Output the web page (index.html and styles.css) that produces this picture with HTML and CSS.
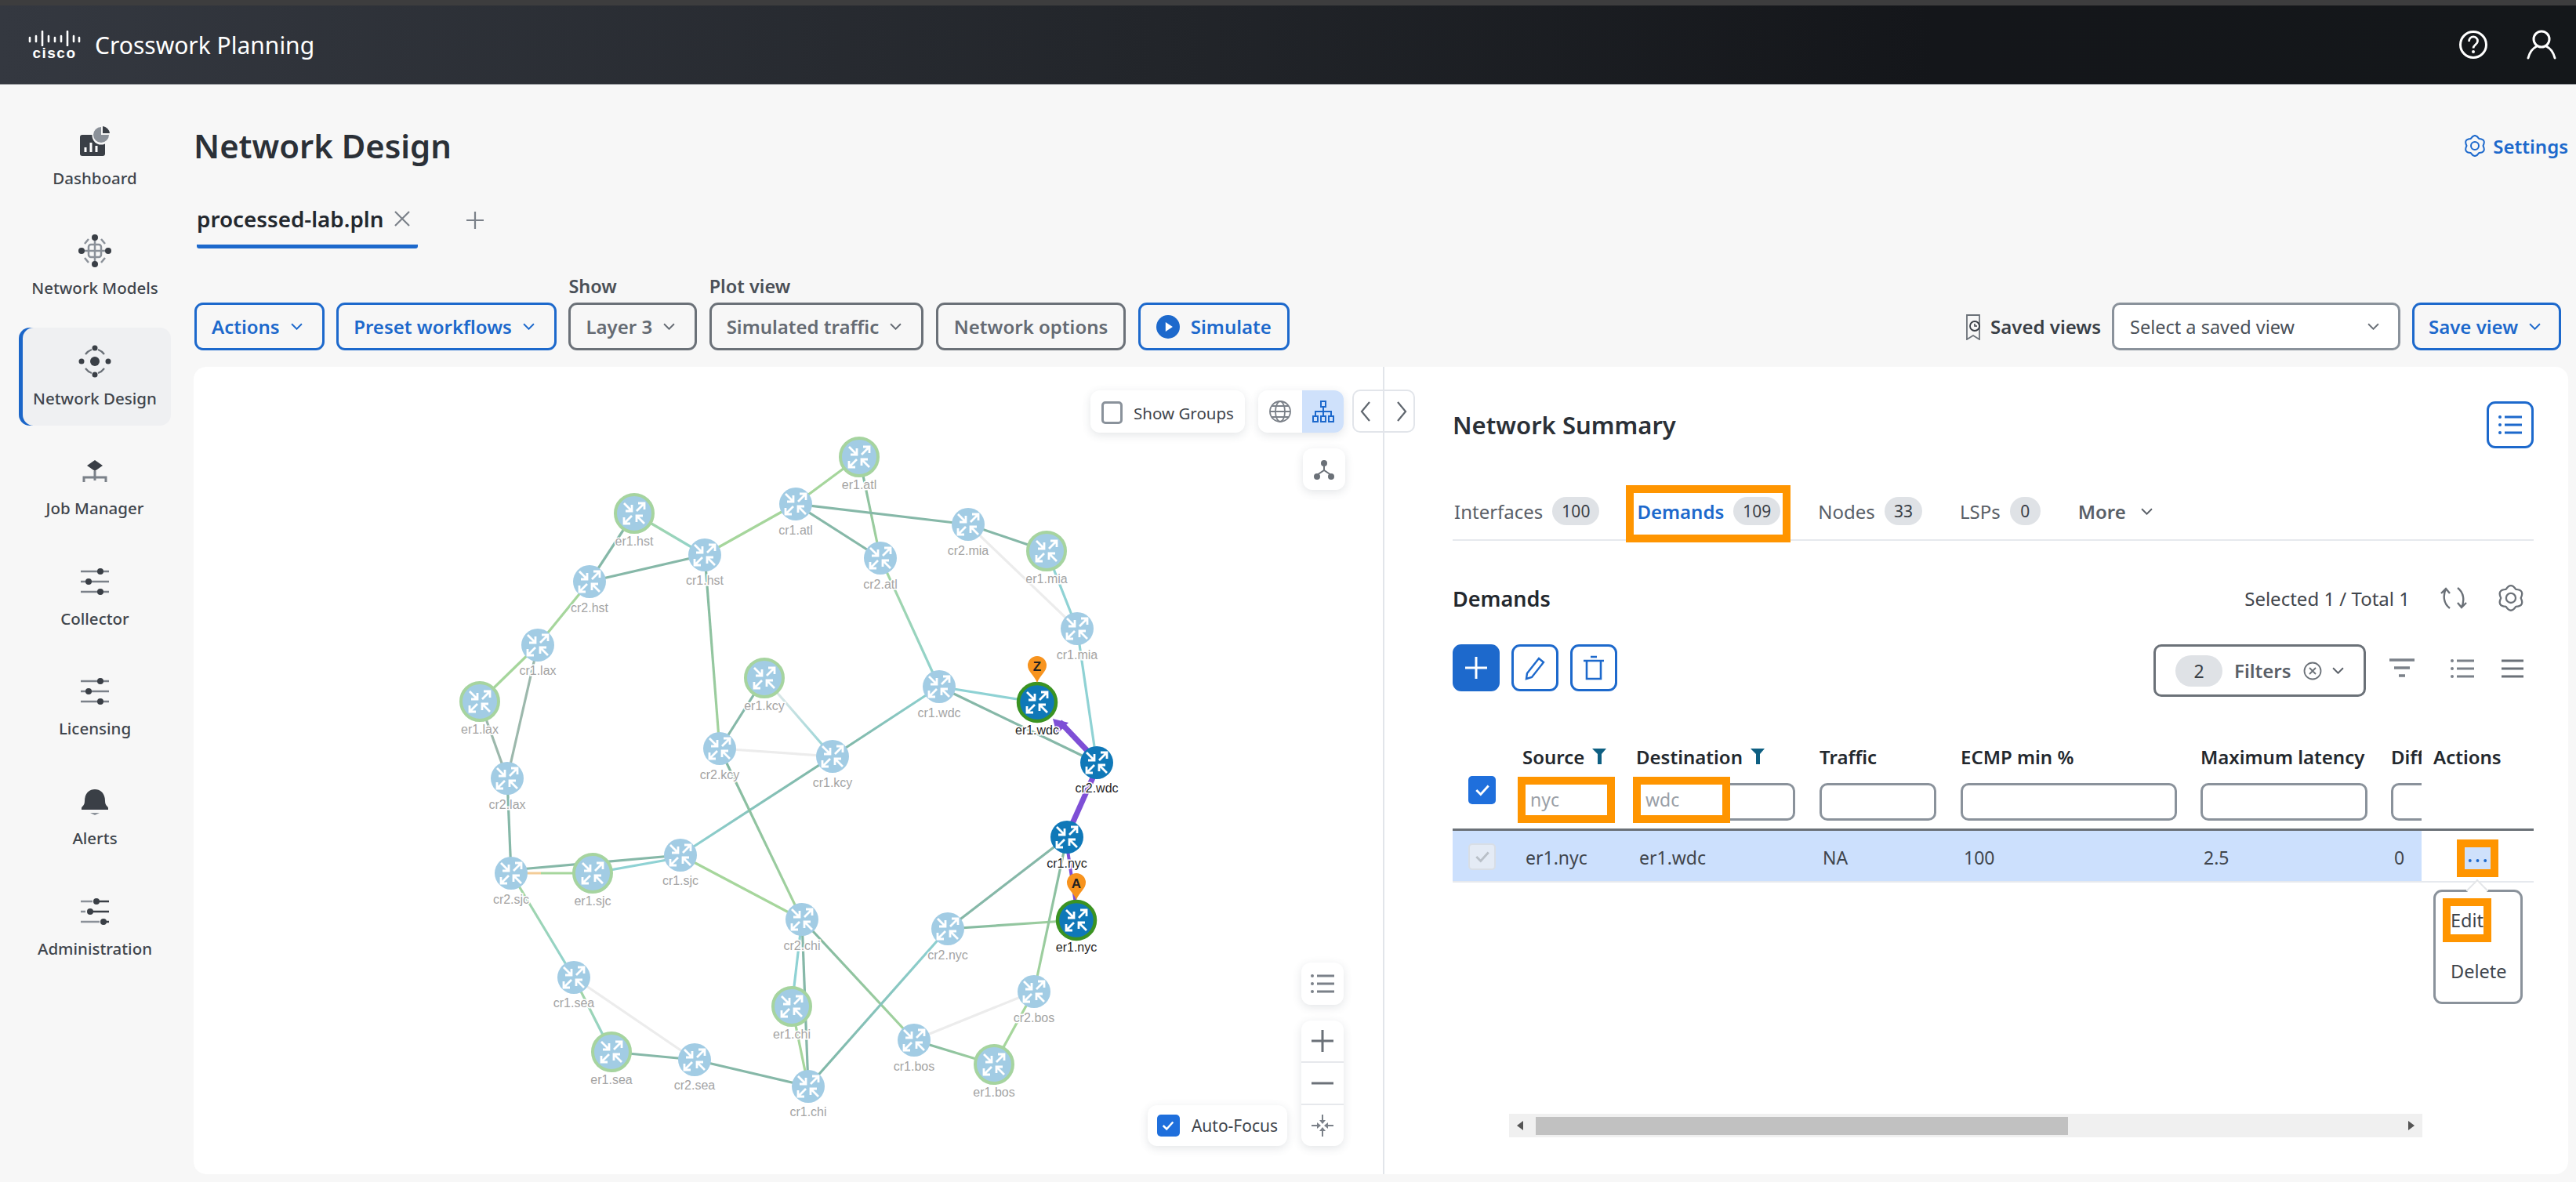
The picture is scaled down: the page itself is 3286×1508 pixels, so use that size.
FILE: index.html
```html
<!DOCTYPE html>
<html lang="en">
<head>
<meta charset="utf-8">
<title>Crosswork Planning</title>
<link rel="stylesheet" href="styles.css">
</head>
<body>
<div class="strip"></div>
<header class="topbar">
  <div class="brand">
    <div class="logo">
      <svg class="logo-bars" viewBox="0 0 67 20" width="67" height="20"><g fill="none" stroke="#fff" stroke-width="2.6" stroke-linecap="round"><path d="M2 9v5M10 7v7M18 1v18M26 7v7M34 9v5M42 7v7M50 1v18M58 7v7M65 9v5"/></g></svg>
      <span class="logo-word">cisco</span>
    </div>
    <span class="product">Crosswork Planning</span>
  </div>
  <div class="top-icons">
    <svg viewBox="0 0 38 38" width="38" height="38"><circle cx="19" cy="19" r="16.5" fill="none" stroke="#fff" stroke-width="3"/><path d="M13.5 15c0-8 11-8 11-.5 0 4.500-5.500 4.500-5.500 9" fill="none" stroke="#fff" stroke-width="2.800"/><circle cx="19" cy="28" r="2" fill="#fff"/></svg>
    <svg viewBox="0 0 38 38" width="38" height="38"><circle cx="19" cy="12" r="10" fill="none" stroke="#fff" stroke-width="3"/><path d="M2 36c2-8 7-13 11-15M36 36c-2-8-7-13-11-15" fill="none" stroke="#fff" stroke-width="3" stroke-linecap="round"/></svg>
  </div>
</header>
<div class="shell">
  <nav class="sidebar">
    <a class="nav-item">
      <svg class="nav-icon" viewBox="0 0 44 44"><rect x="3" y="14" width="32" height="27" rx="3" fill="#3a3f46"/><circle cx="30" cy="15" r="11.500" fill="#f7f7f7"/><path d="M30 4a10 10 0 1 0 10 10H30z" fill="#8b9199"/><path d="M32 3a10 10 0 0 1 9 9h-9z" fill="#3a3f46"/><path d="M10 36v-6M17 36V24M24 36v-8" stroke="#fff" stroke-width="3"/></svg>
      <span>Dashboard</span>
    </a>
    <a class="nav-item">
      <svg class="nav-icon" viewBox="0 0 44 44"><g fill="none" stroke="#8b9199" stroke-width="2.500"><rect x="14" y="14" width="16" height="16" rx="3"/><path d="M22 5v34M5 22h34M9 13l5-6M35 13l-5-6M9 31l5 6M35 31l-5 6"/></g><g fill="#3a3f46"><circle cx="22" cy="5" r="4"/><circle cx="22" cy="39" r="4"/><circle cx="5" cy="22" r="4"/><circle cx="39" cy="22" r="4"/></g></svg>
      <span>Network Models</span>
    </a>
    <a class="nav-item active">
      <svg class="nav-icon" viewBox="0 0 44 44"><g fill="none" stroke="#6b7178" stroke-width="2.200"><path d="M10 13a17 17 0 0 1 8-6M34 13a17 17 0 0 0-8-6M10 31a17 17 0 0 0 8 6M34 31a17 17 0 0 1-8 6"/></g><g fill="#3a3f46"><circle cx="22" cy="22" r="6"/><circle cx="22" cy="5" r="3.500"/><circle cx="22" cy="39" r="3.500"/><circle cx="5" cy="22" r="3.500"/><circle cx="39" cy="22" r="3.500"/></g></svg>
      <span>Network Design</span>
    </a>
    <a class="nav-item">
      <svg class="nav-icon" viewBox="0 0 44 44"><path d="M22 8l10 7-10 7-10-7z" fill="#3a3f46"/><path d="M22 22v8M8 36v-6h28v6M22 30v4" fill="none" stroke="#7b8189" stroke-width="3"/></svg>
      <span>Job Manager</span>
    </a>
    <a class="nav-item">
      <svg class="nav-icon" viewBox="0 0 44 44"><use href="#sliders"/></svg>
      <span>Collector</span>
    </a>
    <a class="nav-item">
      <svg class="nav-icon" viewBox="0 0 44 44"><use href="#sliders"/></svg>
      <span>Licensing</span>
    </a>
    <a class="nav-item">
      <svg class="nav-icon" viewBox="0 0 44 44"><path d="M5 31c0-2 4-3 4-9 0-9 5-15 13-15s13 6 13 15c0 6 4 7 4 9v2H5z" fill="#3a3f46"/><path d="M16 37h12l-6 3z" fill="#8b9199"/></svg>
      <span>Alerts</span>
    </a>
    <a class="nav-item">
      <svg class="nav-icon" viewBox="0 0 44 44"><g stroke-width="2.500" fill="none"><path d="M4 9h15M4 22h6M4 35h24" stroke="#8b9199"/><path d="M24 9h16M16 22h24M34 35h6" stroke="#3a3f46"/></g><g fill="#3a3f46"><circle cx="24" cy="9" r="4"/><circle cx="16" cy="22" r="4"/><circle cx="33" cy="35" r="4"/></g></svg>
      <span>Administration</span>
    </a>
  </nav>

  <main class="content">
    <div class="title-row">
      <h1 class="page-title">Network Design</h1>
      <a class="settings-link">
        <svg viewBox="0 0 28 28" width="28" height="28"><use href="#gear"/></svg>
        <span>Settings</span>
      </a>
    </div>
    <div class="file-tabs">
      <div class="file-tab">
        <span class="file-name">processed-lab.pln</span>
        <svg viewBox="0 0 20 20" width="20" height="20"><path d="M1 1l18 18M19 1L1 19" stroke="#7b8189" stroke-width="2.200"/></svg>
      </div>
      <svg class="file-add" viewBox="0 0 22 22" width="22" height="22"><path d="M11 0v22M0 11h22" stroke="#7b8189" stroke-width="2.200"/></svg>
    </div>

    <div class="toolbar">
      <button class="btn btn-blue">Actions <svg class="chev" viewBox="0 0 14 8"><path d="M1 1l6 6 6-6"/></svg></button>
      <button class="btn btn-blue">Preset workflows <svg class="chev" viewBox="0 0 14 8"><path d="M1 1l6 6 6-6"/></svg></button>
      <div class="labelled">
        <label class="field-label">Show</label>
        <button class="btn btn-grey">Layer 3 <svg class="chev" viewBox="0 0 14 8"><path d="M1 1l6 6 6-6"/></svg></button>
      </div>
      <div class="labelled">
        <label class="field-label">Plot view</label>
        <button class="btn btn-grey">Simulated traffic <svg class="chev" viewBox="0 0 14 8"><path d="M1 1l6 6 6-6"/></svg></button>
      </div>
      <button class="btn btn-grey btn-plain">Network options</button>
      <button class="btn btn-blue btn-plain btn-sim">
        <svg viewBox="0 0 28 28" width="30" height="30"><circle cx="14" cy="14" r="14" fill="#1d69cc"/><path d="M11 8.500l8.500 5.500-8.500 5.500z" fill="#fff"/></svg>
        Simulate
      </button>
      <div class="toolbar-right">
        <span class="saved-label">
          <svg viewBox="0 0 22 34" width="22" height="34"><path d="M3 25V2h16v23M3 25v8l8-5 8 5v-8" fill="none" stroke="#6b7178" stroke-width="1.800"/><circle cx="13" cy="16" r="6" fill="none" stroke="#3a3f46" stroke-width="1.800"/><path d="M13 13v3h3" fill="none" stroke="#3a3f46" stroke-width="1.500"/></svg>
          Saved views
        </span>
        <div class="select">
          <span>Select a saved view</span>
          <svg class="chev" viewBox="0 0 14 8"><path d="M1 1l6 6 6-6"/></svg>
        </div>
        <button class="btn btn-blue btn-save">Save view <svg class="chev" viewBox="0 0 14 8"><path d="M1 1l6 6 6-6"/></svg></button>
      </div>
    </div>

    <section class="panel">
      <div class="graph-pane">
        <svg class="graph" viewBox="247 468 1518 1030" width="1518" height="1030">
          <defs>
            <linearGradient id="v-dg" x1="0" y1="0" x2="0" y2="1"><stop offset="0" stop-color="#7fb5a3"/><stop offset="1" stop-color="#a6d69c"/></linearGradient>
            <linearGradient id="v-dt" x1="0" y1="0" x2="0" y2="1"><stop offset="0" stop-color="#7fb5a3"/><stop offset="1" stop-color="#8fd2d4"/></linearGradient>
            <linearGradient id="v-td" x1="0" y1="0" x2="0" y2="1"><stop offset="0" stop-color="#8fd2d4"/><stop offset="1" stop-color="#7fb5a3"/></linearGradient>
            <linearGradient id="v-gt" x1="0" y1="0" x2="0" y2="1"><stop offset="0" stop-color="#a6d69c"/><stop offset="1" stop-color="#8fd2d4"/></linearGradient>
            <linearGradient id="v-lt" x1="0" y1="0" x2="0" y2="1"><stop offset="0" stop-color="#ececec"/><stop offset="1" stop-color="#8fd2d4"/></linearGradient>
            <linearGradient id="h-dg" x1="0" y1="0" x2="1" y2="0"><stop offset="0" stop-color="#7fb5a3"/><stop offset="1" stop-color="#a6d69c"/></linearGradient>
            <linearGradient id="h-gt" x1="0" y1="0" x2="1" y2="0"><stop offset="0" stop-color="#a6d69c"/><stop offset="1" stop-color="#8fd2d4"/></linearGradient>
            <g id="arrows" fill="none" stroke="#fff" stroke-width="2.800">
              <path d="M-13-13l10 10M-3-11v8h-8"/>
              <path d="M3-3l10-10M5-13h8v8"/>
              <path d="M-3 3l-10 10M-13 5v8h8"/>
              <path d="M13 13L3 3M3 11V3h8"/>
            </g>
            <g id="cr"><circle r="21" fill="#a2cce4"/><use href="#arrows"/></g>
            <g id="er"><circle r="24" fill="#a2cce4" stroke="#a6d49f" stroke-width="4"/><use href="#arrows"/></g>
            <g id="cr-on"><circle r="21" fill="#0f78b8"/><use href="#arrows"/></g>
            <g id="er-on"><circle r="24" fill="#0f78b8" stroke="#3b9322" stroke-width="4.500"/><use href="#arrows"/></g>
          </defs>
          <g class="edges">
            <line class="e-lg" x1="1096" y1="583" x2="1015" y2="643"/>
            <line stroke="url(#v-dg)" x1="1096" y1="583" x2="1123" y2="712"/>
            <line class="e-dk" x1="1015" y1="643" x2="1123" y2="712"/>
            <line class="e-dk" x1="1015" y1="643" x2="1235" y2="669"/>
            <line class="e-lg" x1="1015" y1="643" x2="899" y2="708"/>
            <line stroke="url(#h-gt)" x1="809" y1="655" x2="899" y2="708"/>
            <line class="e-dk" x1="809" y1="655" x2="752" y2="742"/>
            <line class="e-dk" x1="899" y1="708" x2="752" y2="742"/>
            <line class="e-lg" x1="752" y1="742" x2="686" y2="823"/>
            <line class="e-lg" x1="686" y1="823" x2="612" y2="895"/>
            <line class="e-gr" x1="686" y1="823" x2="647" y2="993"/>
            <line class="e-gr" x1="612" y1="895" x2="647" y2="993"/>
            <line stroke="url(#v-dg)" x1="899" y1="708" x2="918" y2="955"/>
            <line class="e-dk" x1="975" y1="865" x2="918" y2="955"/>
            <line stroke="url(#v-lt)" x1="975" y1="865" x2="1062" y2="965"/>
            <line class="e-li" x1="918" y1="955" x2="1062" y2="965"/>
            <line stroke="url(#v-td)" x1="1198" y1="876" x2="1062" y2="965"/>
            <line stroke="url(#v-gt)" x1="1123" y1="712" x2="1198" y2="876"/>
            <line stroke="url(#v-dt)" x1="1062" y1="965" x2="868" y2="1091"/>
            <line stroke="url(#v-dg)" x1="918" y1="955" x2="1023" y2="1173"/>
            <line class="e-dk" x1="647" y1="993" x2="652" y2="1114"/>
            <line class="e-or" x1="652" y1="1114" x2="690" y2="1114"/>
            <line class="e-lg" x1="690" y1="1114" x2="756" y2="1114"/>
            <line class="e-dk" x1="652" y1="1110" x2="868" y2="1091"/>
            <line class="e-te" x1="756" y1="1114" x2="868" y2="1094"/>
            <line class="e-lg" x1="868" y1="1091" x2="1023" y2="1173"/>
            <line stroke="url(#v-gt)" x1="652" y1="1114" x2="732" y2="1247"/>
            <line stroke="url(#v-gt)" x1="732" y1="1247" x2="780" y2="1342"/>
            <line class="e-li" x1="732" y1="1247" x2="886" y2="1352"/>
            <line class="e-dk" x1="780" y1="1342" x2="886" y2="1352"/>
            <line class="e-dk" x1="886" y1="1352" x2="1031" y2="1386"/>
            <line class="e-te" x1="1023" y1="1173" x2="1010" y2="1284"/>
            <line class="e-dk" x1="1023" y1="1173" x2="1031" y2="1386"/>
            <line class="e-lg" x1="1010" y1="1284" x2="1031" y2="1386"/>
            <line stroke="url(#v-dg)" x1="1023" y1="1173" x2="1166" y2="1327"/>
            <line stroke="url(#v-td)" x1="1209" y1="1185" x2="1031" y2="1386"/>
            <line class="e-dk" x1="1209" y1="1185" x2="1361" y2="1068"/>
            <line stroke="url(#h-dg)" x1="1209" y1="1185" x2="1373" y2="1174"/>
            <line stroke="url(#v-dg)" x1="1361" y1="1068" x2="1319" y2="1265"/>
            <line class="e-li" x1="1319" y1="1265" x2="1166" y2="1327"/>
            <line stroke="url(#h-dg)" x1="1166" y1="1327" x2="1268" y2="1358"/>
            <line class="e-lg" x1="1319" y1="1265" x2="1268" y2="1358"/>
            <line class="e-dk" x1="1235" y1="669" x2="1335" y2="703"/>
            <line class="e-li" x1="1235" y1="669" x2="1374" y2="802"/>
            <line class="e-te" x1="1335" y1="703" x2="1374" y2="802"/>
            <line class="e-te" x1="1374" y1="802" x2="1399" y2="973"/>
            <line class="e-te" x1="1198" y1="876" x2="1323" y2="896"/>
            <line class="e-dk" x1="1198" y1="876" x2="1399" y2="973"/>
            <line class="e-pu" x1="1391" y1="962" x2="1352" y2="921"/>
            <line class="e-pu" x1="1395" y1="990" x2="1366" y2="1055"/>
            <line class="e-pt" x1="1373" y1="1160" x2="1362" y2="1085"/>
            <polygon class="head" points="1343,917 1363,922 1348,937"/>
          </g>
          <use href="#er" x="1096" y="583"/><use href="#cr" x="1015" y="643"/><use href="#er" x="809" y="655"/>
          <use href="#cr" x="899" y="708"/><use href="#cr" x="1123" y="712"/><use href="#cr" x="752" y="742"/>
          <use href="#cr" x="686" y="823"/><use href="#er" x="975" y="865"/><use href="#er" x="612" y="895"/>
          <use href="#cr" x="918" y="955"/><use href="#cr" x="1062" y="965"/><use href="#cr" x="647" y="993"/>
          <use href="#cr" x="652" y="1114"/><use href="#er" x="756" y="1114"/><use href="#cr" x="868" y="1091"/>
          <use href="#cr" x="1023" y="1173"/><use href="#cr" x="732" y="1247"/><use href="#er" x="1010" y="1284"/>
          <use href="#er" x="780" y="1342"/><use href="#cr" x="886" y="1352"/><use href="#cr" x="1031" y="1386"/>
          <use href="#cr" x="1235" y="669"/><use href="#er" x="1335" y="703"/><use href="#cr" x="1374" y="802"/>
          <use href="#cr" x="1198" y="876"/><use href="#er-on" x="1323" y="896"/><use href="#cr-on" x="1399" y="973"/>
          <use href="#cr-on" x="1361" y="1068"/><use href="#er-on" x="1373" y="1174"/><use href="#cr" x="1209" y="1185"/>
          <use href="#cr" x="1319" y="1265"/><use href="#cr" x="1166" y="1327"/><use href="#er" x="1268" y="1358"/>
          <g class="labels">
            <text x="1096" y="624">er1.atl</text><text x="1015" y="682">cr1.atl</text><text x="809" y="696">er1.hst</text>
            <text x="899" y="746">cr1.hst</text><text x="1123" y="751">cr2.atl</text><text x="752" y="781">cr2.hst</text>
            <text x="686" y="861">cr1.lax</text><text x="975" y="906">er1.kcy</text><text x="612" y="936">er1.lax</text>
            <text x="918" y="994">cr2.kcy</text><text x="1062" y="1004">cr1.kcy</text><text x="647" y="1032">cr2.lax</text>
            <text x="652" y="1153">cr2.sjc</text><text x="756" y="1155">er1.sjc</text><text x="868" y="1129">cr1.sjc</text>
            <text x="1023" y="1212">cr2.chi</text><text x="732" y="1285">cr1.sea</text><text x="1010" y="1325">er1.chi</text>
            <text x="780" y="1383">er1.sea</text><text x="886" y="1390">cr2.sea</text><text x="1031" y="1424">cr1.chi</text>
            <text x="1235" y="708">cr2.mia</text><text x="1335" y="744">er1.mia</text><text x="1374" y="841">cr1.mia</text>
            <text x="1198" y="915">cr1.wdc</text><text x="1209" y="1224">cr2.nyc</text>
            <text x="1319" y="1304">cr2.bos</text><text x="1166" y="1366">cr1.bos</text><text x="1268" y="1399">er1.bos</text>
            <text class="lbl-on" x="1323" y="937">er1.wdc</text><text class="lbl-on" x="1399" y="1011">cr2.wdc</text>
            <text class="lbl-on" x="1361" y="1107">cr1.nyc</text><text class="lbl-on" x="1373" y="1214">er1.nyc</text>
          </g>
          <g class="pin"><path transform="translate(1323 871)" d="M0 0C-4-10-12-14-12-22A12 12 0 0 1 12-22C12-14 4-10 0 0Z"/><text x="1323" y="856">Z</text></g>
          <g class="pin"><path transform="translate(1373 1148)" d="M0 0C-4-10-12-14-12-22A12 12 0 0 1 12-22C12-14 4-10 0 0Z"/><text x="1373" y="1133">A</text></g>
        </svg>

        <div class="ctl ctl-groups"><span class="cb-empty"></span><span>Show Groups</span></div>
        <div class="ctl ctl-views">
          <span class="view-btn">
            <svg viewBox="0 0 32 32" width="32" height="32"><g fill="none" stroke="#7b8189" stroke-width="1.800"><circle cx="16" cy="16" r="13"/><ellipse cx="16" cy="16" rx="6" ry="13"/><path d="M3 16h26M5 9h22M5 23h22"/></g></svg>
          </span>
          <span class="view-btn view-on">
            <svg viewBox="0 0 32 32" width="32" height="32"><g fill="none" stroke="#1d69cc" stroke-width="2"><rect x="13" y="3" width="6" height="7"/><path d="M16 10v6M6 22v-6h20v6M16 16v6"/><rect x="3" y="22" width="6" height="7"/><rect x="13" y="22" width="6" height="7"/><rect x="23" y="22" width="6" height="7"/></g></svg>
          </span>
        </div>
        <div class="ctl ctl-layout">
          <svg viewBox="0 0 28 28" width="28" height="28"><g fill="#6b7178"><circle cx="14" cy="6" r="4"/><circle cx="5" cy="23" r="4"/><circle cx="23" cy="23" r="4"/></g><path d="M14 8v8M5 21l9-6 9 6" fill="none" stroke="#6b7178" stroke-width="2"/></svg>
        </div>
        <div class="ctl ctl-list">
          <svg viewBox="0 0 30 30" width="30" height="30"><use href="#listicon"/></svg>
        </div>
        <div class="ctl ctl-zoom">
          <span class="zoom-cell"><svg viewBox="0 0 30 30" width="30" height="30"><path d="M15 1v28M1 15h28" stroke="#6b7178" stroke-width="3"/></svg></span>
          <span class="zoom-cell"><svg viewBox="0 0 30 30" width="30" height="30"><path d="M1 15h28" stroke="#6b7178" stroke-width="3"/></svg></span>
          <span class="zoom-cell"><svg viewBox="0 0 30 30" width="30" height="30"><g fill="#7b8189"><path d="M15 13l-4-5h3V1h2v7h3zM15 17l-4 5h3v7h2v-7h3zM13 15l-5-4v3H1v2h7v3zM17 15l5-4v3h7v2h-7v3z"/></g></svg></span>
        </div>
        <div class="ctl ctl-focus"><span class="cb-on small"><svg viewBox="0 0 20 20" width="18" height="18"><path d="M3 10l5 5 9-10" fill="none" stroke="#fff" stroke-width="2.800"/></svg></span><span>Auto-Focus</span></div>
      </div>

      <div class="collapse-btn">
        <svg viewBox="0 0 14 28" width="14" height="28"><path d="M12 2L2 14l10 12" fill="none" stroke="#5f666e" stroke-width="2.200"/></svg>
        <svg viewBox="0 0 14 28" width="14" height="28"><path d="M2 2l10 12L2 26" fill="none" stroke="#5f666e" stroke-width="2.200"/></svg>
      </div>

      <div class="summary-pane">
        <div class="summary-head">
          <h2 class="summary-title">Network Summary</h2>
          <button class="icon-btn icon-btn-tall"><svg viewBox="0 0 30 30" width="30" height="30"><use href="#listicon-blue"/></svg></button>
        </div>
        <div class="tabs">
          <span class="tab">Interfaces <b class="badge">100</b></span>
          <span class="tab tab-on">Demands <b class="badge">109</b><i class="hl hl-tab"></i></span>
          <span class="tab">Nodes <b class="badge">33</b></span>
          <span class="tab">LSPs <b class="badge">0</b></span>
          <span class="tab tab-more">More <svg class="chev" viewBox="0 0 14 8"><path d="M1 1l6 6 6-6"/></svg></span>
        </div>
        <div class="section-head">
          <h3 class="section-title">Demands</h3>
          <div class="section-tools">
            <span>Selected 1 / Total 1</span>
            <svg class="st-refresh" viewBox="0 0 38 30" width="38" height="30"><g fill="none" stroke="#6b7178" stroke-width="2.400"><path d="M14 28C6 22 5 12 9 3M3 9l6-6 5 6"/><path d="M24 2c8 6 9 16 5 25M35 21l-6 6-5-6"/></g></svg>
            <svg viewBox="0 0 34 34" width="34" height="34"><use href="#gear-grey"/></svg>
          </div>
        </div>
        <div class="list-toolbar">
          <div class="action-btns">
            <button class="icon-btn icon-primary"><svg viewBox="0 0 30 30" width="30" height="30"><path d="M15 1v28M1 15h28" stroke="#fff" stroke-width="3"/></svg></button>
            <button class="icon-btn"><svg viewBox="0 0 30 34" width="30" height="34"><path d="M5 24L20 5l6 5-15 19-7 2z" fill="none" stroke="#1d69cc" stroke-width="2.400"/></svg></button>
            <button class="icon-btn"><svg viewBox="0 0 30 34" width="30" height="34"><path d="M6 8h18v23H6zM2 8h26M11 3h8" fill="none" stroke="#1d69cc" stroke-width="2.600"/></svg></button>
          </div>
          <div class="view-tools">
            <div class="filters">
              <b class="badge badge-lg">2</b>
              <span class="filters-text">Filters</span>
              <svg viewBox="0 0 24 24" width="24" height="24"><circle cx="12" cy="12" r="10.500" fill="none" stroke="#6b7178" stroke-width="1.800"/><path d="M8 8l8 8M16 8l-8 8" stroke="#6b7178" stroke-width="1.800"/></svg>
              <svg class="chev" viewBox="0 0 14 8"><path d="M1 1l6 6 6-6"/></svg>
            </div>
            <svg class="vt-filter" viewBox="0 0 32 26" width="32" height="26"><path d="M0 2h32M6 12h20M12 22h8" stroke="#7b8189" stroke-width="3.500"/></svg>
            <svg class="vt-list" viewBox="0 0 30 30" width="30" height="30"><use href="#listicon"/></svg>
            <svg class="vt-menu" viewBox="0 0 30 26" width="30" height="26"><path d="M1 3h28M1 13h28M1 23h28" stroke="#6b7178" stroke-width="3"/></svg>
          </div>
        </div>

        <div class="table">
          <div class="t-row t-head">
            <div></div>
            <div class="th">Source <svg class="funnel" viewBox="0 0 18 20"><path d="M0 0h18l-6 7v13H7V7z"/></svg></div>
            <div class="th">Destination <svg class="funnel" viewBox="0 0 18 20"><path d="M0 0h18l-6 7v13H7V7z"/></svg></div>
            <div class="th">Traffic</div>
            <div class="th">ECMP min %</div>
            <div class="th">Maximum latency</div>
            <div class="th th-clip">Diff</div>
            <div class="th th-act">Actions</div>
          </div>
          <div class="t-row t-filter">
            <div class="cell-check"><span class="cb-on"><svg viewBox="0 0 20 20" width="22" height="22"><path d="M3 10l5 5 9-10" fill="none" stroke="#fff" stroke-width="2.600"/></svg></span></div>
            <div class="f-cell"><div class="f-input"></div><span class="hl hl-src">nyc</span></div>
            <div class="f-cell"><div class="f-input f-wide"></div><span class="hl hl-dst">wdc</span></div>
            <div class="f-cell"><div class="f-input f-traffic"></div></div>
            <div class="f-cell"><div class="f-input f-ecmp"></div></div>
            <div class="f-cell"><div class="f-input f-lat"></div></div>
            <div class="f-cell f-clip"><div class="f-input f-diff"></div></div>
            <div></div>
          </div>
          <div class="t-row t-data">
            <div class="cell-check"><span class="cb-off"><svg viewBox="0 0 20 20" width="22" height="22"><path d="M3 10l5 5 9-10" fill="none" stroke="#b9c0c8" stroke-width="2.600"/></svg></span></div>
            <div class="td">er1.nyc</div>
            <div class="td">er1.wdc</div>
            <div class="td">NA</div>
            <div class="td">100</div>
            <div class="td">2.5</div>
            <div class="td">0</div>
            <div class="td-act">
              <span class="hl hl-dots"><svg viewBox="0 0 34 8" width="34" height="8"><g fill="#1d69cc"><circle cx="7" cy="4" r="2"/><circle cx="17" cy="4" r="2"/><circle cx="27" cy="4" r="2"/></g></svg></span>
              <div class="menu">
                <span class="menu-item"><span class="hl hl-edit">Edit</span></span>
                <span class="menu-item">Delete</span>
              </div>
            </div>
          </div>
        </div>

        <div class="scrollbar">
          <svg class="sb-arrow" viewBox="0 0 8 12" width="8" height="12"><path d="M8 0v12L0 6z"/></svg>
          <div class="sb-thumb"></div>
          <svg class="sb-arrow" viewBox="0 0 8 12" width="8" height="12"><path d="M0 0v12l8-6z"/></svg>
        </div>
      </div>
    </section>
  </main>
</div>

<svg class="sprite" width="0" height="0">
  <defs>
    <g id="sliders">
      <path d="M4 9h36M4 22h36M4 35h36" stroke="#7b8189" stroke-width="2.500"/>
      <g fill="#3a3f46"><circle cx="29" cy="9" r="4"/><circle cx="14" cy="22" r="4"/><circle cx="29" cy="35" r="4"/></g>
    </g>
    <g id="listicon">
      <path d="M8 5h22M8 15h22M8 25h22" stroke="#7b8189" stroke-width="3"/>
      <g fill="#7b8189"><circle cx="2" cy="5" r="2"/><circle cx="2" cy="15" r="2"/><circle cx="2" cy="25" r="2"/></g>
    </g>
    <g id="listicon-blue">
      <path d="M8 5h22M8 15h22M8 25h22" stroke="#1d69cc" stroke-width="3"/>
      <g fill="#1d69cc"><circle cx="2" cy="5" r="2"/><circle cx="2" cy="15" r="2"/><circle cx="2" cy="25" r="2"/></g>
    </g>
    <g id="gear">
      <path d="M8.750 4.900Q14-3 19.250 4.900Q28.700 5.500 24.500 14Q28.700 22.500 19.250 23.100Q14 31 8.750 23.100Q-.7 22.500 3.500 14Q-.7 5.500 8.750 4.900Z" fill="none" stroke="#1d69cc" stroke-width="2" stroke-linejoin="round"/>
      <circle cx="14" cy="14" r="5" fill="none" stroke="#1d69cc" stroke-width="2"/>
    </g>
    <g id="gear-grey" transform="scale(1.210)">
      <path d="M8.750 4.900Q14-3 19.250 4.900Q28.700 5.500 24.500 14Q28.700 22.500 19.250 23.100Q14 31 8.750 23.100Q-.7 22.500 3.500 14Q-.7 5.500 8.750 4.900Z" fill="none" stroke="#6b7178" stroke-width="1.900" stroke-linejoin="round"/>
      <circle cx="14" cy="14" r="5" fill="none" stroke="#6b7178" stroke-width="1.900"/>
    </g>
  </defs>
</svg>
</body>
</html>
```

FILE: styles.css
```css
* { box-sizing: border-box; }
html, body { margin: 0; padding: 0; }
body {
  width: 3286px;
  height: 1508px;
  overflow: hidden;
  background: #f7f7f7;
  color: #23282e;
  font-family: "Noto Sans", "Open Sans", sans-serif;
  font-size: 24px;
}
button { font-family: inherit; background: none; cursor: pointer; }
h1, h2, h3 { margin: 0; }
.sprite { position: absolute; }

.strip { height: 7px; background: #3d3d3e; }
.topbar {
  height: 101px;
  display: flex;
  align-items: center;
  justify-content: space-between;
  padding: 0 25px 0 36px;
  background: linear-gradient(90deg, #343840 0%, #22252a 45%, #14161a 75%, #14171a 100%);
  border-bottom: 1px solid #8a8d91;
}
.brand { display: flex; align-items: center; gap: 18px; }
.logo { width: 67px; display: flex; flex-direction: column; align-items: center; }
.logo-bars { display: block; }
.logo-word {
  font: 700 19px/17px "Liberation Sans", sans-serif;
  letter-spacing: 1.500px;
  color: #fff;
}
.product { color: #fff; font-size: 30px; font-weight: 400; line-height: 44px; padding-top: 2px; }
.top-icons { display: flex; gap: 49px; }

.shell { display: flex; }
.sidebar {
  width: 247px;
  flex: none;
  padding: 29px 29px 0 24px;
  display: flex;
  flex-direction: column;
  gap: 15.400px;
}
.nav-item {
  height: 125px;
  padding-top: 21px;
  display: flex;
  flex-direction: column;
  align-items: center;
  border-radius: 14px;
  color: #3f454c;
  font-size: 20.500px;
  font-weight: 500;
  line-height: 28px;
  white-space: nowrap;
}
.nav-item span { margin-top: 11px; }
.nav-icon { width: 44px; height: 44px; flex: none; }
.nav-item.active { background: #eff0f2; box-shadow: inset 5px 0 0 #1b66c9; }

.content { flex: 1; min-width: 0; padding-right: 10px; }
.title-row {
  height: 60px;
  margin-top: 48px;
  display: flex;
  align-items: center;
  justify-content: space-between;
}
.page-title { font-size: 41.800px; font-weight: 600; color: #2b3037; line-height: 60px; }
.settings-link { display: flex; align-items: center; gap: 9px; color: #1d69cc; font-weight: 600; font-size: 24px; }
.file-tabs { margin-top: 34px; height: 67px; display: flex; padding-left: 4px; gap: 62px; }
.file-tab {
  height: 67px;
  padding-bottom: 5px;
  display: flex;
  align-items: center;
  gap: 14px;
  width: 282px;
  border-bottom: 5px solid #1d69cc;
  border-radius: 0 0 3px 3px;
}
.file-name { font-size: 27.800px; font-weight: 600; color: #23282e; white-space: nowrap; }
.file-add { margin-top: 20px; }

.toolbar { margin-top: 33px; height: 97px; display: flex; align-items: flex-end; gap: 15.500px; padding-right: 9px; padding-left: 1px; }
.btn {
  height: 61px;
  padding: 0 25px 0 19px;
  border: 3px solid;
  border-radius: 11px;
  font-size: 24px;
  font-weight: 600;
  display: flex;
  align-items: center;
  gap: 14px;
  white-space: nowrap;
}
.btn-plain { padding: 0 20px; }
.btn-blue { border-color: #1d69cc; color: #1d69cc; }
.btn-grey { border-color: #6b7178; color: #656b73; }
.btn-save { width: 190px; padding: 0 0 0 18px; }
.chev { width: 15px; height: 9px; flex: none; }
.chev path { fill: none; stroke: currentColor; stroke-width: 1.800; }
.labelled { display: flex; flex-direction: column; }
.field-label { font-size: 23.500px; font-weight: 600; line-height: 30px; margin-bottom: 6px; color: #4a5058; }
.toolbar-right { margin-left: auto; display: flex; align-items: center; gap: 15px; }
.saved-label { display: flex; align-items: center; gap: 11px; font-weight: 600; font-size: 24px; color: #3a3f46; margin-right: -1px; }
.select {
  width: 368px;
  height: 61px;
  padding: 0 24px 0 20px;
  border: 3px solid #8a929b;
  border-radius: 10px;
  background: #fff;
  display: flex;
  align-items: center;
  justify-content: space-between;
  color: #4a5058;
  font-size: 23.500px;
}
.select .chev { color: #6b7178; }

.panel {
  margin-top: 21px;
  height: 1030px;
  position: relative;
  display: flex;
  background: #fff;
  border-radius: 16px;
}
.graph-pane { width: 1519px; flex: none; position: relative; border-right: 2px solid #e2e5ea; }
.graph { display: block; }
.edges line { stroke-width: 3.200; }
.e-lg { stroke: #a6d69c; }
.e-dk { stroke: #86b8a8; }
.e-te { stroke: #8fd2d4; }
.e-gr { stroke: #9cb8ac; }
.e-li { stroke: #ececec; }
.e-or { stroke: #f3cc97; }
.edges .e-pu { stroke: #7e4fd6; stroke-width: 7; }
.edges .e-pt { stroke: #7e4fd6; stroke-width: 4; }
.head { fill: #7e4fd6; }
.labels text {
  font: 16px "Liberation Sans", sans-serif;
  fill: #a4a4a4;
  text-anchor: middle;
  paint-order: stroke;
  stroke: #fff;
  stroke-width: 3px;
}
.labels .lbl-on { fill: #1f1f1f; }
.pin path { fill: #f7931e; }
.pin text { font: 700 17px "Liberation Sans", sans-serif; fill: #222; text-anchor: middle; }

.ctl {
  position: absolute;
  background: #fff;
  border-radius: 12px;
  box-shadow: 0 3px 12px rgba(60, 70, 85, .14);
  display: flex;
  align-items: center;
  justify-content: center;
  font-size: 20.500px;
  color: #3f454c;
}
.ctl-groups { left: 1144px; top: 30px; width: 197px; height: 54px; gap: 14px; padding-top: 3px; }
.cb-empty { width: 27px; height: 29px; border: 3px solid #8a929b; border-radius: 5px; }
.ctl-views { left: 1358px; top: 30px; height: 54px; width: 109px; justify-content: flex-start; padding-left: 0; overflow: hidden; }
.view-btn { width: 56px; height: 54px; display: flex; align-items: center; justify-content: center; flex: none; }
.view-on { background: #cfe1fb; width: 53px; }
.ctl-layout { left: 1415px; top: 104px; width: 54px; height: 53px; }
.ctl-list { left: 1413px; top: 760px; width: 54px; height: 54px; }
.ctl-zoom { left: 1413px; top: 834px; width: 54px; height: 160px; flex-direction: column; }
.zoom-cell { flex: 1; width: 100%; display: flex; align-items: center; justify-content: center; border-bottom: 2px solid #e6e8ec; }
.zoom-cell:last-child { border-bottom: 0; }
.ctl-focus { left: 1217px; top: 942px; width: 178px; height: 52px; gap: 15px; font-size: 21px; }
.cb-on {
  width: 35px; height: 36px;
  background: #1f6fdc;
  border-radius: 5px;
  display: inline-flex;
  align-items: center;
  justify-content: center;
  flex: none;
}
.cb-on.small { width: 29px; height: 28px; }
.collapse-btn {
  position: absolute;
  left: 1478px;
  top: 29px;
  width: 80px;
  height: 55px;
  display: flex;
  align-items: center;
  justify-content: space-between;
  padding: 0 8px;
  border: 2px solid #e2e5ea;
  border-radius: 10px;
  background: linear-gradient(90deg, #fff 0 49%, #e2e5ea 49% 51%, #fff 51% 100%);
  z-index: 2;
}

.summary-pane { flex: 1; min-width: 0; padding: 44px 44px 0 87px; }
.summary-head { height: 60px; display: flex; align-items: center; justify-content: space-between; }
.summary-title { font-size: 31px; font-weight: 600; color: #2b3037; }
.icon-btn {
  width: 60px;
  height: 60px;
  padding: 0;
  border: 3px solid #1d69cc;
  border-radius: 11px;
  display: flex;
  align-items: center;
  justify-content: center;
}
.icon-primary { background: #1d69cc; }
.tabs {
  margin-top: 48px;
  height: 70px;
  display: flex;
  align-items: center;
  padding-bottom: 4px;
  padding-left: 2px;
  gap: 48px;
  border-bottom: 2px solid #e6e9ee;
  color: #5a6068;
}
.tab { position: relative; display: flex; align-items: center; gap: 12px; font-size: 24px; white-space: nowrap; }
.tab-on { color: #1d69cc; font-weight: 600; }
.tab-more { font-weight: 600; gap: 19px; }
.badge {
  min-width: 39px;
  height: 36px;
  padding: 0 12px;
  border-radius: 18px;
  background: #dfe2e6;
  color: #3a3f46;
  font-size: 21px;
  font-weight: 400;
  display: inline-flex;
  align-items: center;
  justify-content: center;
}
.badge-lg { width: 60px; height: 40px; border-radius: 20px; font-size: 23px; }

.hl {
  position: absolute;
  display: block;
  border: 10px solid #ff9500;
  font-style: normal;
}
.hl-tab { left: -14px; top: -15px; width: 210px; height: 73px; }
.section-head { margin-top: 52px; height: 42px; display: flex; align-items: center; justify-content: space-between; }
.section-title { font-size: 27px; font-weight: 600; color: #23282e; }
.section-tools { display: flex; align-items: center; gap: 37px; font-size: 24px; color: #3f454c; padding-right: 12px; }
.section-tools svg { flex: none; }
.list-toolbar { margin-top: 38px; height: 66px; display: flex; justify-content: space-between; }
.action-btns { display: flex; gap: 15px; }
.view-tools { display: flex; gap: 0; align-items: flex-start; }
.filters {
  width: 271px;
  height: 67px;
  padding: 0 24px 0 25px;
  border: 3px solid #6b7178;
  border-radius: 10px;
  display: flex;
  align-items: center;
  gap: 15px;
  color: #5a6068;
}
.filters-text { font-weight: 600; }
.filters .chev { margin-left: -2px; }
.vt-filter { margin: 18px 0 0 30px; }
.vt-list { margin: 16px 0 0 46px; }
.vt-menu { margin: 18px 12px 0 34px; }

.table { margin-top: 56px; }
.t-row { display: grid; grid-template-columns: 89px 145px 234px 180px 306px 243px 39px 144px; }
.t-head { height: 42px; align-items: center; font-weight: 600; font-size: 24px; color: #23282e; white-space: nowrap; }
.th { display: flex; align-items: center; gap: 10px; }
.th-clip { overflow: hidden; }
.th-act { padding-left: 15px; }
.funnel { width: 18px; height: 20px; fill: #0e5f82; flex: none; }
.t-filter { margin-top: 13px; padding-bottom: 10px; border-bottom: 3px solid #6b7178; box-sizing: content-box; height: 48px; }
.cell-check { padding-left: 20px; }
.t-filter .cell-check { margin-top: -9px; }
.f-cell { position: relative; }
.f-clip { overflow: hidden; }
.f-input { height: 48px; width: 118px; border: 3px solid #8a929b; border-radius: 10px; background: #fff; }
.f-wide { width: 203px; }
.f-traffic { width: 149px; }
.f-ecmp { width: 276px; }
.f-lat { width: 213px; }
.f-diff { width: 120px; }
.hl-src, .hl-dst {
  top: -8px;
  width: 124px;
  height: 59px;
  padding-left: 6px;
  background: #fff;
  background-clip: padding-box;
  color: #9aa0a7;
  line-height: 38px;
  font-size: 23px;
}
.hl-src { left: -6px; }
.hl-dst { left: -4px; }
.t-data { height: 66px; align-items: center; border-bottom: 2px solid #e6e9ee; font-size: 23px; color: #3f454c; position: relative; background: linear-gradient(90deg, #cce0fd 0 1236px, #fff 1236px 100%); }
.cb-off {
  width: 35px; height: 34px;
  background: #e4ebf5;
  border: 2px solid #d8dee6;
  border-radius: 5px;
  display: inline-flex;
  align-items: center;
  justify-content: center;
}
.td { padding: 2px 0 0 4px; }
.td-act { position: relative; height: 66px; }
.hl-dots {
  left: 45px;
  top: 11px;
  width: 53px;
  height: 48px;
  background: #cfe1fb;
  background-clip: padding-box;
  display: flex;
  align-items: center;
  justify-content: center;
  padding-top: 6px;
}
.menu {
  position: absolute;
  left: 15px;
  top: 75px;
  width: 114px;
  height: 146px;
  border: 3px solid #8a929b;
  border-radius: 11px;
  background: #fff;
  z-index: 3;
  font-size: 23.500px;
  color: #3f454c;
}
.menu::before {
  content: "";
  position: absolute;
  left: 43px;
  top: -15px;
  width: 18px;
  height: 18px;
  border-left: 2px solid #e3e5e8;
  border-top: 2px solid #e3e5e8;
  transform: rotate(45deg) translate(2px, 2px);
  background: #fff;
}
.menu-item { position: absolute; left: 19px; top: 85px; }
.menu-item:first-child { top: 8px; left: 9px; }
.hl-edit {
  position: relative;
  width: 62px;
  height: 56px;
  line-height: 36px;
  background: #fff;
  background-clip: padding-box;
  color: #3f454c;
}
.scrollbar {
  margin: 295px 0 0 72px;
  width: 1165px;
  height: 30px;
  background: #f0f0f0;
  display: flex;
  align-items: center;
  justify-content: space-between;
  padding: 0 10px;
  position: relative;
}
.sb-arrow { fill: #555; flex: none; }
.sb-thumb { position: absolute; left: 34px; top: 4px; width: 679px; height: 23px; background: #c1c1c1; }
```
